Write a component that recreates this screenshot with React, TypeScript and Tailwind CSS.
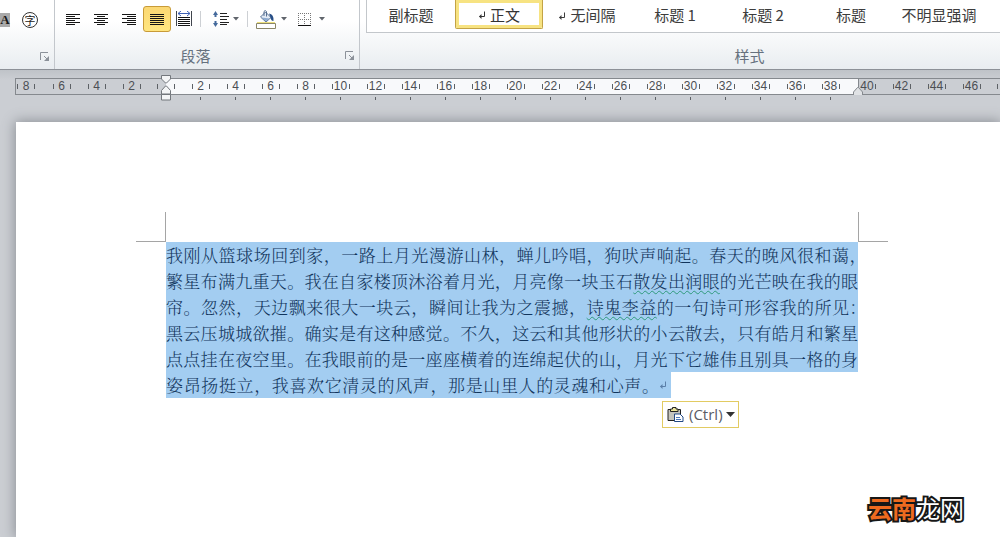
import { useState } from "react"
import type { ReactNode } from "react"

const styleNames = [
    { name: "副标题", mark: false },
    { name: "正文", mark: true },
    { name: "无间隔", mark: true },
    { name: "标题 1", mark: false },
    { name: "标题 2", mark: false },
    { name: "标题", mark: false },
    { name: "不明显强调", mark: false },
]

const lines: ReactNode[] = [
    <>我刚从篮球场回到家，一路上月光漫游山林，蝉儿吟唱，狗吠声响起。春天的晚风很和蔼<Hanging>，</Hanging></>,
    <>繁星布满九重天。我在自家楼顶沐浴着月光，月亮像一块玉石<Grammar>散发出润眼</Grammar>的光芒映在我的眼</>,
    <>帘。忽然，天边飘来很大一块云，瞬间让我为之震撼，<Grammar>诗鬼李益</Grammar>的一句诗可形容我的所见<Hanging>：</Hanging></>,
    "黑云压城城欲摧。确实是有这种感觉。不久，这云和其他形状的小云散去，只有皓月和繁星",
    "点点挂在夜空里。在我眼前的是一座座横着的连绵起伏的山，月光下它雄伟且别具一格的身",
]

const leftNumbers = [6, 4, 2]
const middleNumbers = Array.from({ length: 19 }, (_, i) => (i + 1) * 2)
const rightNumbers = [42, 44, 46]

function Grammar({ children }: { children: ReactNode }) {
    return <span className="underline decoration-[#2f9a7c] decoration-wavy decoration-1 underline-offset-2">{children}</span>
}

// half-width form for punctuation that closes a full line
function Hanging({ children }: { children: ReactNode }) {
    return <span className="[font-feature-settings:'halt']">{children}</span>
}

function ReturnMark({ className }: { className: string }) {
    return (
        <svg viewBox="0 0 8 8" className={className} fill="none" stroke="currentColor" aria-hidden="true">
            <path d="M6.5 0.5V5.5H1.5" />
            <path d="M3.5 3L1 5.5L3.5 8Z" fill="currentColor" stroke="none" />
        </svg>
    )
}

function Caret() {
    return (
        <svg width="6" height="4" viewBox="0 0 6 4" aria-hidden="true">
            <path d="M0 0H6L3 3.5Z" fill="#60656c" />
        </svg>
    )
}

function Launcher({ label }: { label: string }) {
    return (
        <button aria-label={label} className="h-[10px] w-[10px]">
            <svg width="10" height="10" viewBox="0 0 10 10" fill="none" aria-hidden="true">
                <path d="M0.5 8V0.5H8" stroke="#8b9199" />
                <path d="M4 4L7 7" stroke="#8b9199" />
                <path d="M9 4V9H4Z" fill="#8b9199" />
            </svg>
        </button>
    )
}

function AlignIcon({ d }: { d: string }) {
    return (
        <svg width="14" height="13" viewBox="0 0 14 13" aria-hidden="true" shapeRendering="crispEdges">
            <path d={d} stroke="#151515" fill="none" />
        </svg>
    )
}

const alignments = [
    { label: "左对齐", d: "M0 1.5H14M0 3.5H9M0 5.5H14M0 7.5H9M0 9.5H14M0 11.5H9" },
    { label: "居中", d: "M0 1.5H14M3 3.5H11M0 5.5H14M3 7.5H11M0 9.5H14M3 11.5H11" },
    { label: "右对齐", d: "M0 1.5H14M5 3.5H14M0 5.5H14M5 7.5H14M0 9.5H14M5 11.5H14" },
    { label: "两端对齐", d: "M0 1.5H14M0 3.5H14M0 5.5H14M0 7.5H14M0 9.5H14M0 11.5H14" },
]

function Tick() {
    return <span className="h-[5px] w-px shrink-0 bg-[#5d6166]" />
}

function RulerCell({ value, below }: { value: number; below?: boolean }) {
    return (
        <span className="relative flex w-[35px] shrink-0 items-center justify-center">
            <Tick />
            <span className="w-4 text-center">{value}</span>
            <Tick />
            {below && <span className="absolute top-[18px] left-[17px] h-[3px] w-px bg-[#5d6166]" />}
        </span>
    )
}

function Ruler() {
    return (
        <div className="relative ml-[15px] flex h-[17px] border-y border-l border-[#85898e] text-[12px] leading-[15px] text-[#4b4f54] [font-family:'Liberation_Sans_Narrow','Liberation_Sans',sans-serif]">
            <div className="flex w-[150px] shrink-0">
                <span className="flex w-7 shrink-0 items-center justify-start">
                    <span className="ml-px flex items-center">
                        <Tick />
                        <span className="w-4 text-center">8</span>
                        <Tick />
                    </span>
                </span>
                {leftNumbers.map((n) => <RulerCell key={n} value={n} />)}
                <span className="flex w-[17px] shrink-0 items-center justify-center"><Tick /></span>
            </div>
            <div className="flex w-[692px] min-w-0 bg-[#f8f9fb]">
                <span className="flex w-[17px] shrink-0 items-center justify-center"><Tick /></span>
                {middleNumbers.map((n) => <RulerCell key={n} value={n} below />)}
            </div>
            <div className="flex min-w-0 flex-1 overflow-hidden border-l border-[#85898e]">
                <span className="flex w-[25px] shrink-0 items-center">
                    <span className="w-4 text-center">40</span>
                    <Tick />
                </span>
                {rightNumbers.map((n) => <RulerCell key={n} value={n} />)}
                <span className="flex w-[17px] items-center pl-2"><Tick /></span>
            </div>
            <svg className="absolute -top-1 left-[145px]" width="10" height="26" viewBox="0 0 10 26" fill="#f4f5f6" stroke="#73777c" aria-hidden="true">
                <path d="M0.5 0.5H9.5V4L5.5 8H4.5L0.5 4Z" />
                <path d="M0.5 19V15.5L4.5 11H5.5L9.5 15.5V19Z" />
                <path d="M0.5 19.5H9.5V25H0.5Z" />
            </svg>
            <svg className="absolute top-2 left-[837px]" width="10" height="8" viewBox="0 0 10 8" fill="#e0e2e5" stroke="#85898e" aria-hidden="true">
                <path d="M0.5 8V5L4.5 0.5H5.5L9.5 5V8" />
            </svg>
        </div>
    )
}

export default function App() {
    const [align, setAlign] = useState("两端对齐")
    const [current, setCurrent] = useState("正文")

    return (
        <div className="relative flex min-h-screen flex-col overflow-hidden bg-[#cbced3] [font-family:'Noto_Sans_CJK_SC',sans-serif]">
            <header className="flex h-[70px] border-b border-[#8d9197] bg-linear-to-b from-white from-30% to-[#e9edf0]">
                <section aria-label="字体" className="flex w-[55px] shrink-0 flex-col justify-between border-r border-[#c3c7cc]">
                    <div className="flex h-10 items-center gap-3">
                        <button aria-label="字符底纹" className="flex h-[14px] w-[10px] items-center justify-center bg-[#a9a9a9] text-[13px] leading-[14px] font-bold text-[#1a1a1a] [font-family:'Liberation_Serif',serif]">A</button>
                        <button aria-label="带圈字符" className="flex h-4 w-4 items-center justify-center rounded-full border border-[#333] text-[11px] leading-none text-[#222]">字</button>
                    </div>
                    <div className="flex justify-end pr-1 pb-[7px]"><Launcher label="字体设置" /></div>
                </section>

                <section aria-label="段落" className="flex w-[305px] shrink-0 flex-col justify-between border-r border-[#c3c7cc]">
                    <div className="flex h-[38px] items-center pl-1">
                        {alignments.map((a) => (
                            <button
                                key={a.label}
                                aria-label={a.label}
                                onClick={() => setAlign(a.label)}
                                className={a.label === align
                                    ? "flex h-[26px] w-7 items-center justify-center rounded-[3px] border border-[#c89b38] bg-linear-to-b from-[#fbd873] to-[#ffe680]"
                                    : "flex h-[26px] w-7 items-center justify-center"}
                            >
                                <AlignIcon d={a.d} />
                            </button>
                        ))}
                        <button aria-label="分散对齐" className="ml-[5px]">
                            <svg width="16" height="16" viewBox="0 0 16 16" fill="none" aria-hidden="true">
                                <path d="M0.5 0V15M15.5 0V15" stroke="#40454d" />
                                <path d="M2 2.5H14M5 0L2 2.5L5 5M11 0L14 2.5L11 5" stroke="#3f62b5" />
                                <path d="M2 6.5H14M2 8.5H14M2 10.5H14M2 12.5H14M2 14.5H14" stroke="#151515" />
                            </svg>
                        </button>
                        <span className="ml-2 h-4 w-px bg-[#cdd0d4]" />
                        <button aria-label="行距" className="ml-3 flex items-center gap-1">
                            <svg width="16" height="16" viewBox="0 0 16 16" fill="none" aria-hidden="true">
                                <path d="M2.5 2V6M2.5 10V14" stroke="#456a9c" strokeWidth="2" />
                                <path d="M0 4L2.5 0L5 4ZM0 12L2.5 16L5 12Z" fill="#456a9c" />
                                <path d="M7 2.5H14M7 5.5H16M7 8.5H14M7 11.5H16M7 13.5H14" stroke="#222" />
                            </svg>
                            <Caret />
                        </button>
                        <span className="ml-2 h-4 w-px bg-[#cdd0d4]" />
                        <button aria-label="底纹" className="ml-2 flex items-center gap-[5px]">
                            <svg width="20" height="19" viewBox="0 0 20 19" fill="none" aria-hidden="true">
                                <path d="M9.5 2L15 7.5L10 12L4.5 7Z" fill="#e3ebf5" stroke="#566f91" />
                                <path d="M5.5 7.5L13.5 8.5L10 11.5Z" fill="#8eabd0" />
                                <path d="M8 6V1.5Q9 -0.5 10.5 1.5V6.5" stroke="#566f91" />
                                <path d="M13 3.5Q18 4 17.5 11Q15 11 14.5 7.5Z" fill="#284f87" />
                                <path d="M1 12.5H19" stroke="#ece07d" />
                                <path d="M0.5 13.5H19.5V18.5H0.5Z" fill="#fff" stroke="#8a8668" />
                            </svg>
                            <Caret />
                        </button>
                        <button aria-label="边框" className="ml-[11px] flex items-center gap-2">
                            <svg width="13" height="13" viewBox="0 0 13 13" fill="none" aria-hidden="true" shapeRendering="crispEdges">
                                <path d="M0 0.5H13M0 6.5H13M0.5 0V12M6.5 0V12M12.5 0V12" stroke="#777" strokeDasharray="1 1" />
                                <path d="M0 12.5H13" stroke="#111" />
                            </svg>
                            <Caret />
                        </button>
                    </div>
                    <div className="flex items-center justify-end pb-px">
                        <span className="flex-1 pr-[9px] text-center text-[15px] leading-6 text-[#66717e]">段落</span>
                        <span className="flex pr-1"><Launcher label="段落设置" /></span>
                    </div>
                </section>

                <section aria-label="样式" className="flex min-w-0 flex-1 flex-col justify-between pl-[6px]">
                    <div className="flex h-[33px] overflow-hidden border-b border-l border-[#c3c7cb] bg-white">
                        {styleNames.map((s) => (
                            <button
                                key={s.name}
                                onClick={() => setCurrent(s.name)}
                                className={s.name === current
                                    ? "flex h-[29px] w-[88px] shrink-0 items-center justify-center rounded-b-[2px] border border-t-0 border-[#c3a345] pt-[2px] text-[15px] text-[#333] inset-ring-3 inset-ring-[#f7e382]"
                                    : "flex h-[29px] w-[88px] shrink-0 items-center justify-center pt-[2px] text-[15px] text-[#3c3c3c]"}
                            >
                                {s.mark && <ReturnMark className="mr-1 h-2 w-2" />}
                                <span className="whitespace-nowrap">{s.name}</span>
                            </button>
                        ))}
                    </div>
                    <div className="pl-[133px] pb-px text-center text-[15px] leading-6 text-[#66717e]">样式</div>
                </section>
            </header>

            <div className="bg-linear-to-b from-[#bfc3c8] to-[#cbced3] to-40% pt-2">
                <Ruler />
            </div>

            <main className="mt-[27px] ml-4 flex-1 bg-white pt-[90px] pr-28 pb-16 pl-[120px] shadow-[0_0_12px_1px_#8b8f95]">
                <div className="flex justify-between">
                    <span className="h-[30px] w-[30px] border-r border-b border-[#a5a5a5]" />
                    <span className="h-[30px] w-[30px] border-b border-l border-[#a5a5a5]" />
                </div>
                <article className="relative mx-[30px] text-[17px] leading-[26px] font-light text-[#12355c] [font-family:'Noto_Serif_CJK_SC','SimSun','Noto_Sans_CJK_SC',serif]">
                    {lines.map((line, i) => (
                        <p key={i} className="bg-[#a3cdf1] text-justify whitespace-nowrap [text-align-last:justify]">{line}</p>
                    ))}
                    <p className="flex w-[505px] items-center bg-[#a3cdf1]">
                        <span className="w-[493px] text-justify [text-align-last:justify]">姿昂扬挺立，我喜欢它清灵的风声，那是山里人的灵魂和心声。</span>
                        <ReturnMark className="h-2 w-2 text-[#5b7fa8]" />
                    </p>
                    <button className="absolute top-[159px] left-[496px] flex h-[27px] w-[77px] items-center border border-[#e2cb62] bg-white pl-1 text-[15px] leading-6 font-normal text-[#5a5c66] [font-family:'Open_Sans',sans-serif]">
                        <svg className="mr-[5px] shrink-0" width="17" height="16" viewBox="0 0 17 16" fill="none" aria-hidden="true">
                            <path d="M1 2.5H13.5V13.5H1Z" fill="#c4c4bd" stroke="#222" />
                            <path d="M3.5 4.5V2H5.5V0.5H9V2H11V4.5Z" fill="#ece49a" stroke="#222" />
                            <path d="M7.5 7H13L16 10V14.5H7.5Z" fill="#fff" stroke="#234a86" />
                            <path d="M9 10.5H13M9 12.5H14" stroke="#4b78ba" />
                        </svg>
                        <span className="pb-[2px]">(Ctrl)</span>
                        <svg className="ml-[3px] shrink-0" width="9" height="5" viewBox="0 0 9 5" aria-hidden="true">
                            <path d="M0 0H9L4.5 5Z" fill="#333" />
                        </svg>
                    </button>
                </article>
            </main>

            <div className="absolute right-9 bottom-[13px] text-[24px] leading-8 font-bold text-white [-webkit-text-stroke:4px_#171717] [paint-order:stroke_fill]">
                <span className="text-[#ee6a1f]">云南</span>
                <span className="font-normal">龙网</span>
            </div>
        </div>
    )
}
